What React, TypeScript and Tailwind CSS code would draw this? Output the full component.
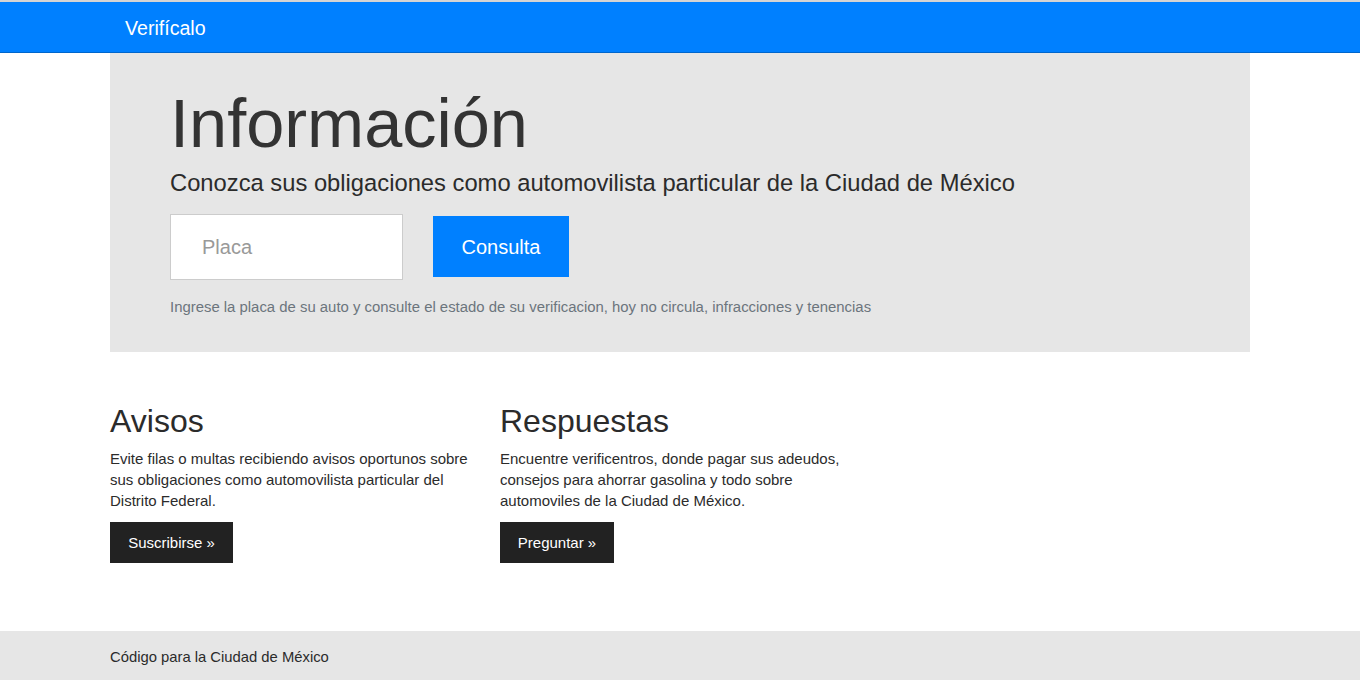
import React from "react";

export default function App() {
  return (
    <div className="min-h-[680px] bg-white flex flex-col" style={{ fontFamily: '"Liberation Sans", Arial, sans-serif' }}>
      <nav className="border-t-2 border-t-[#d4d4d4] border-b border-b-[#0066cc] bg-[#0080ff] h-[53px]">
        <div className="w-[1140px] mx-auto px-[15px] h-full flex items-center pt-[3px]">
          <span className="text-white text-[19.6px] leading-none">Verifícalo</span>
        </div>
      </nav>
      <div className="w-[1140px] mx-auto">
        <div className="bg-[#e6e6e6] h-[299px] px-[60px] pt-[30px]">
          <h1 className="text-[68.5px] leading-[1.2] text-[#333333]">Información</h1>
          <p className="mt-[4px] text-[23.75px] leading-[1.2] text-[#2b2b2b]">Conozca sus obligaciones como automovilista particular de la Ciudad de México</p>
          <div className="mt-[16px] flex items-center gap-[30px]">
            <div className="w-[233px] h-[66px] bg-white border border-[#cccccc] flex items-center pl-[31px] text-[20px] text-[#999999]">Placa</div>
            <button className="w-[136px] h-[61px] bg-[#0080ff] text-white text-[20px]">Consulta</button>
          </div>
          <p className="mt-[17px] text-[14.9px] leading-[21px] text-[#6c757d]">Ingrese la placa de su auto y consulte el estado de su verificacion, hoy no circula, infracciones y tenencias</p>
        </div>
        <div className="flex gap-[30px] mt-[50px]">
          <div className="w-[360px]">
            <h2 className="text-[32px] leading-[1.2] text-[#2b2b2b]">Avisos</h2>
            <p className="mt-[8px] text-[15px] leading-[21px] text-[#2b2b2b]">Evite filas o multas recibiendo avisos oportunos sobre sus obligaciones como automovilista particular del Distrito Federal.</p>
            <button className="mt-[11px] h-[41px] px-[17px] w-[123px] bg-[#222222] text-white text-[15px]">Suscribirse »</button>
          </div>
          <div className="w-[360px]">
            <h2 className="text-[32px] leading-[1.2] text-[#2b2b2b]">Respuestas</h2>
            <p className="mt-[8px] text-[15px] leading-[21px] text-[#2b2b2b]">Encuentre verificentros, donde pagar sus adeudos, consejos para ahorrar gasolina y todo sobre automoviles de la Ciudad de México.</p>
            <button className="mt-[11px] h-[41px] w-[114px] bg-[#222222] text-white text-[15px]">Preguntar »</button>
          </div>
        </div>
      </div>
      <footer className="mt-auto bg-[#e6e6e6] h-[49px]">
        <div className="w-[1140px] mx-auto h-full flex items-center pt-[4px]">
          <span className="text-[14.8px] text-[#2b2b2b]">Código para la Ciudad de México</span>
        </div>
      </footer>
    </div>
  );
}
